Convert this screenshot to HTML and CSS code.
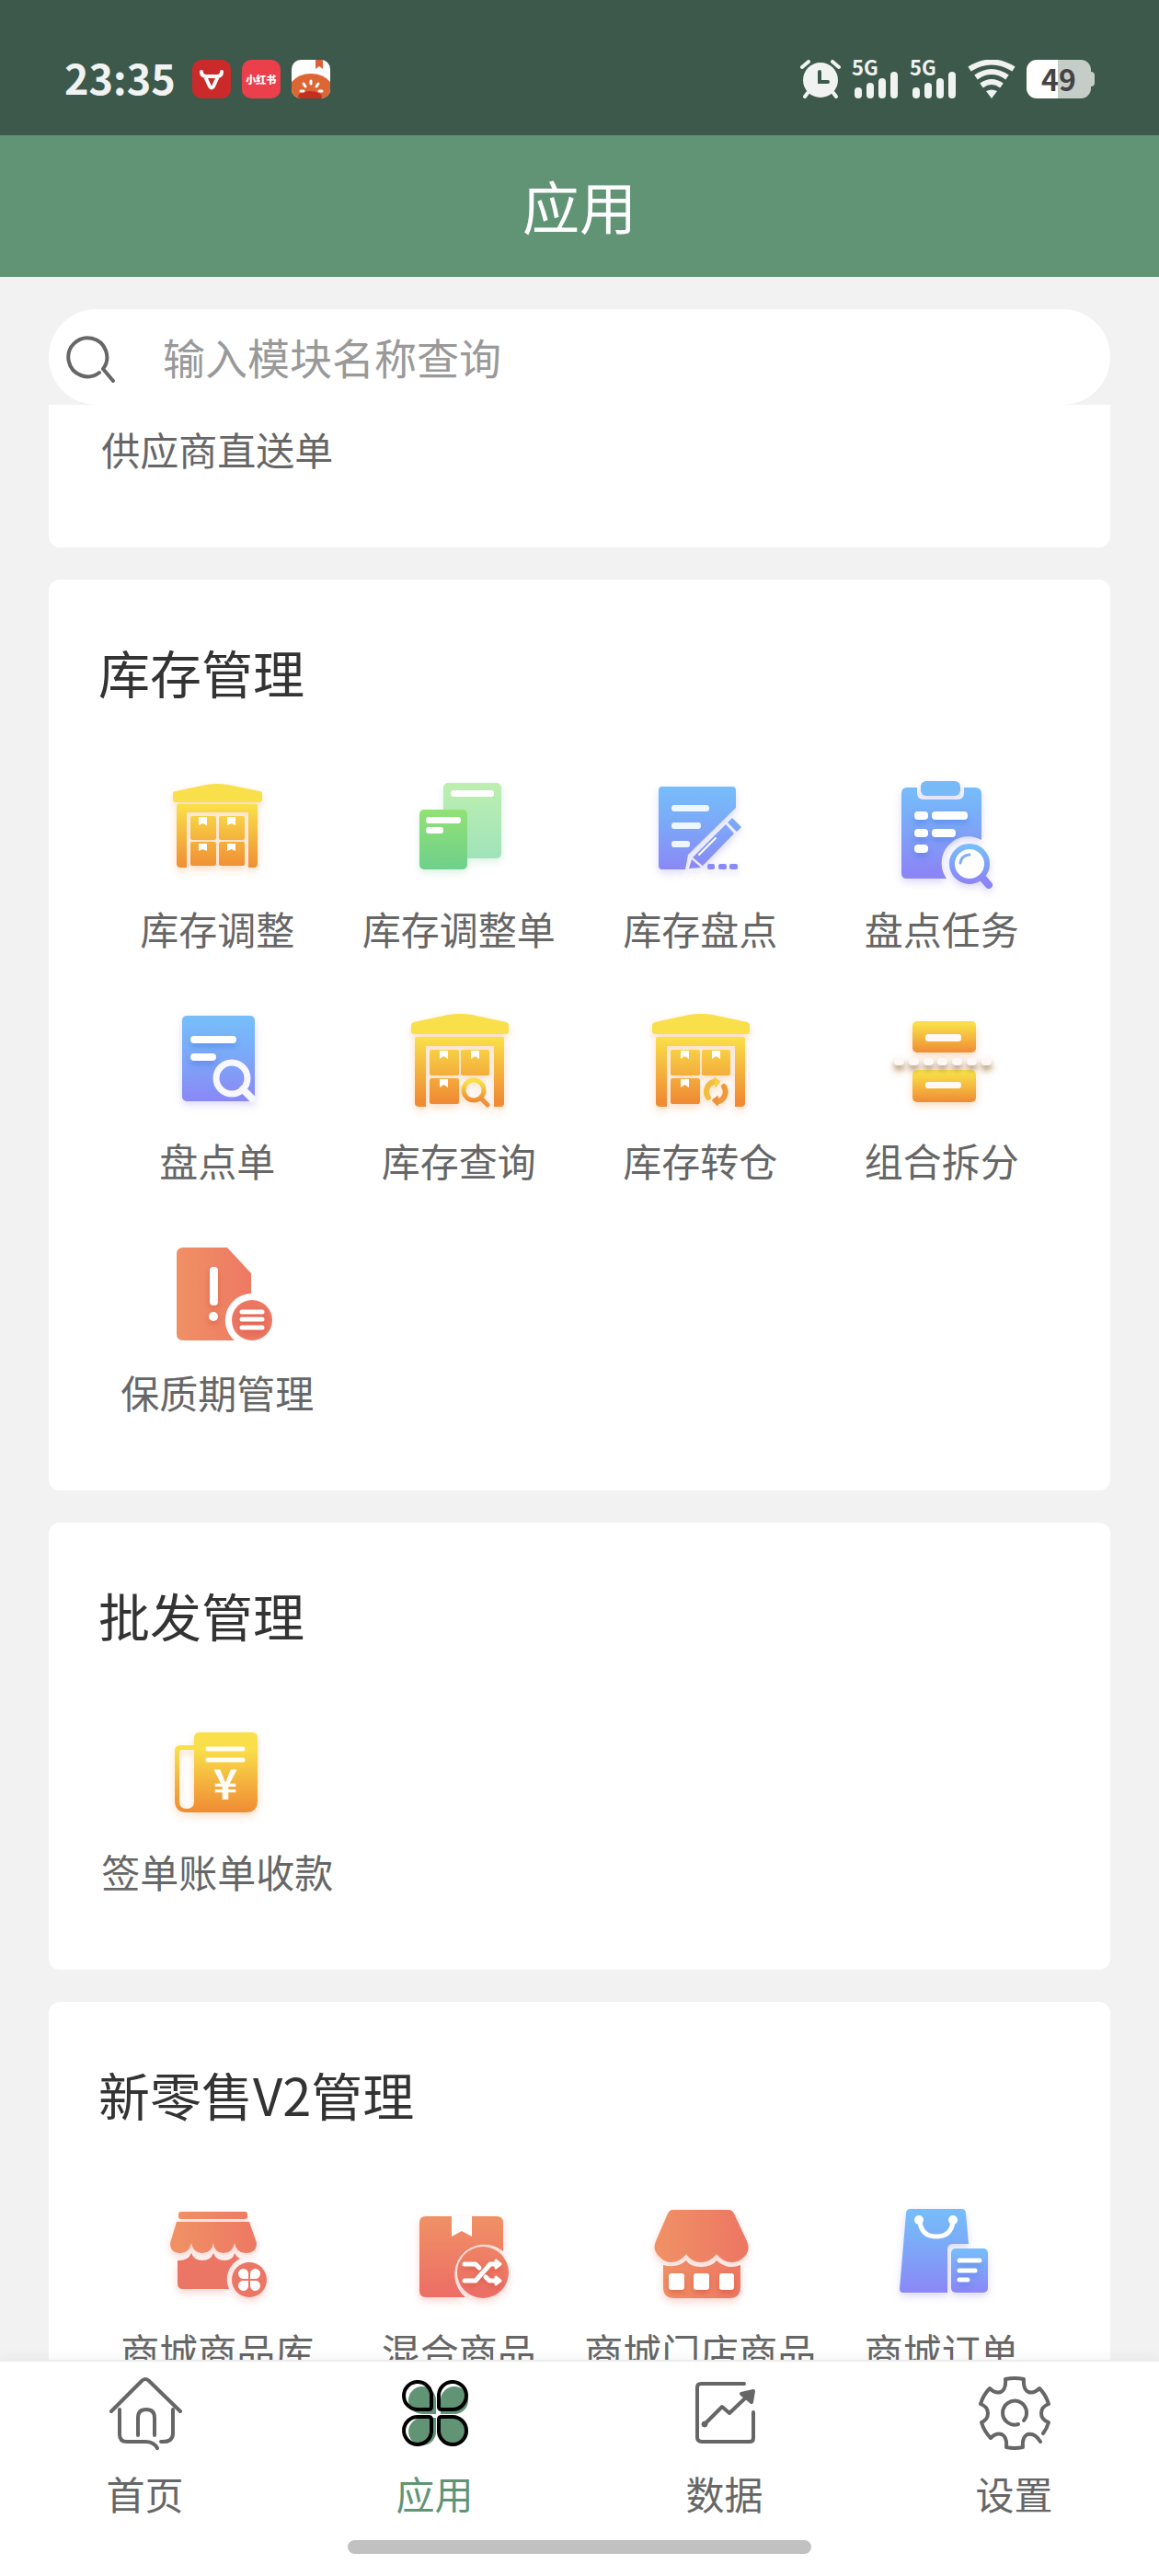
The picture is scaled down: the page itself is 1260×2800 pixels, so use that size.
FILE: index.html
```
<!DOCTYPE html>
<html lang="zh-CN">
    <head>
        <meta charset="UTF-8">
        <meta name="viewport" content="width=device-width, initial-scale=1">
        <title>应用</title>
        <link rel="stylesheet" href="styles.css">
    </head>
    <body>
        <!-- shared gradients and shapes -->
        <svg class="defs" width="0" height="0" aria-hidden="true">
            <defs>
                <linearGradient id="gold" gradientUnits="userSpaceOnUse" x1="0" y1="36" x2="0" y2="104">
                    <stop offset="0" stop-color="#f9df49"/><stop offset="1" stop-color="#f08c34"/>
                </linearGradient>
                <linearGradient id="goldbox" x1="0" y1="0" x2="0" y2="1">
                    <stop offset="0.1" stop-color="#f9de48"/><stop offset="1" stop-color="#f08c34"/>
                </linearGradient>
                <linearGradient id="blue" gradientUnits="userSpaceOnUse" x1="0" y1="15" x2="0" y2="108">
                    <stop offset="0" stop-color="#77bdfa"/><stop offset="0.35" stop-color="#7aadf8"/><stop offset="1" stop-color="#8b86f6"/>
                </linearGradient>
                <linearGradient id="bluebox" x1="0" y1="0" x2="0" y2="1">
                    <stop offset="0" stop-color="#77bdfa"/><stop offset="1" stop-color="#8b86f6"/>
                </linearGradient>
                <linearGradient id="coral" gradientUnits="userSpaceOnUse" x1="18" y1="0" x2="112" y2="0">
                    <stop offset="0" stop-color="#f09165"/><stop offset="1" stop-color="#ed7763"/>
                </linearGradient>
                <linearGradient id="coraldown" gradientUnits="userSpaceOnUse" x1="0" y1="22" x2="0" y2="112">
                    <stop offset="0" stop-color="#f09165"/><stop offset="1" stop-color="#ec6d66"/>
                </linearGradient>
                <linearGradient id="greenlight" x1="0" y1="0" x2="0" y2="1">
                    <stop offset="0" stop-color="#bdefaf"/><stop offset="1" stop-color="#a0e3ba"/>
                </linearGradient>
                <linearGradient id="green" x1="0" y1="0" x2="0" y2="1">
                    <stop offset="0" stop-color="#91e275"/><stop offset="1" stop-color="#6fd08b"/>
                </linearGradient>
            </defs>
            <symbol id="depot" viewBox="0 0 130 130">
                <path fill="#f9df49" d="M13 22q0-2 3-3l37-8q13-2 26 0l37 8q3 1 3 3v7q0 3-3 3H16q-3 0-3-3z"/>
                <path fill="url(#gold)" d="M19 35h93q2 0 2 2v70q0 4-4 4h-7V45H29v66h-7q-5 0-5-4V37q0-2 2-2z"/>
                <path fill="url(#gold)" d="M35 49h28q2 0 2 2v24q0 2-2 2H35q-2 0-2-2V51q0-2 2-2zM69 49h27q2 0 2 2v24q0 2-2 2H69q-2 0-2-2V51q0-2 2-2zM35 80h28q2 0 2 2v24q0 2-2 2H35q-2 0-2-2V82q0-2 2-2z"/>
                <path fill="#fff" d="M44 50h9v9l-4.500-3-4.500 3zM78 50h9v9l-4.500-3-4.500 3zM44 81h9v9l-4.500-3-4.500 3z"/>
            </symbol>
        </svg>

        <header>
            <div class="status">
                <div class="status-left">
                    <span class="time">23:35</span>
                    <span class="badge badge-red">
                        <svg viewBox="0 0 42 42" width="42" height="42" aria-hidden="true">
                            <path d="M10 13q0 5 5 5h12q5 0 5-5M14 18l5 11q2 3 4 0l5-11" fill="none" stroke="#fff" stroke-width="4" stroke-linecap="round" stroke-linejoin="round"/>
                        </svg>
                    </span>
                    <span class="badge badge-book">小红书</span>
                    <span class="badge badge-tomato">
                        <svg viewBox="0 0 42 42" width="42" height="42" aria-hidden="true">
                            <path d="M26 0h8v10l-4-3-4 3z" fill="#d9603a"/>
                            <path d="M0 24Q8 15 21 15t21 9v18H0z" fill="#dc6634"/>
                            <ellipse cx="20" cy="40" rx="13" ry="6" fill="#c4301f"/>
                            <path d="M21 23v3M13 26l2 3M29 26l-2 3M10 34h3M30 34h3" stroke="#fff" stroke-width="3" stroke-linecap="round"/>
                        </svg>
                    </span>
                </div>
                <div class="status-right">
                    <svg viewBox="0 0 44 42" width="44" height="42" aria-hidden="true">
                        <circle cx="22" cy="22" r="19" fill="#f0f3f1"/>
                        <path d="M2 8l7-6M42 8l-7-6M8 36l-3 4M36 36l3 4" stroke="#f0f3f1" stroke-width="4" stroke-linecap="round"/>
                        <path d="M21 13v11h9" fill="none" stroke="#3d594c" stroke-width="4" stroke-linecap="round"/>
                    </svg>
                    <svg class="signal" viewBox="0 0 51 42" width="51" height="42" aria-hidden="true">
                        <text class="net" x="0" y="17">5G</text>
                        <path d="M7 34v4M20 29v9M33 24v14M46 17v21" stroke="#f0f3f1" stroke-width="8" stroke-linecap="round"/>
                    </svg>
                    <svg class="signal" viewBox="0 0 51 42" width="51" height="42" aria-hidden="true">
                        <text class="net" x="0" y="17">5G</text>
                        <path d="M7 34v4M20 29v9M33 24v14M46 17v21" stroke="#f0f3f1" stroke-width="8" stroke-linecap="round"/>
                    </svg>
                    <svg viewBox="0 0 52 42" width="52" height="42" aria-hidden="true">
                        <path d="M2 10q24-15 48 0M9 19q17-12 34 0M15 28q11-8 22 0" fill="none" stroke="#f0f3f1" stroke-width="6"/>
                        <path d="M20 34q6-3 12 0l-6 8z" fill="#f0f3f1"/>
                    </svg>
                    <span class="battery"><span class="battery-level">49</span></span>
                </div>
            </div>
            <h1 class="title">应用</h1>
        </header>

        <label class="search">
            <svg viewBox="0 0 56 56" width="56" height="56" aria-hidden="true">
                <path d="M37 45A21 21 0 1 1 41 41L52 54" fill="none" stroke="#666" stroke-width="4" stroke-linecap="round" stroke-linejoin="round"/>
            </svg>
            <input type="search" placeholder="输入模块名称查询" aria-label="输入模块名称查询">
        </label>

        <main class="list">
            <section class="card card-cut">
                <div class="apps">
                    <a class="app" href="#">供应商直送单</a>
                </div>
            </section>

            <section class="card">
                <h2>库存管理</h2>
                <div class="apps">
                    <a class="app" href="#">
                        <svg class="icon gold" viewBox="0 0 130 130" aria-hidden="true">
                            <path fill="#f9df49" d="M17 22q0-2 3-2l33-7q12-2 24 0l34 7q3 0 3 2v7q0 3-3 3H20q-3 0-3-3z"/>
                            <path fill="url(#gold)" d="M23 34h84q2 0 2 2v63q0 4-4 4h-6V43H32v60h-6q-5 0-5-4V36q0-2 2-2z"/>
                            <g fill="url(#gold)">
                                <rect x="36" y="47" width="28" height="26" rx="2"/>
                                <rect x="67" y="47" width="28" height="26" rx="2"/>
                                <rect x="36" y="75" width="28" height="26" rx="2"/>
                                <rect x="67" y="75" width="28" height="26" rx="2"/>
                            </g>
                            <path fill="#fff" d="M45 48h9v9l-4.500-2-4.500 2zM76 48h9v9l-4.500-2-4.500 2zM45 77h9v8l-4.500-2-4.500 2zM76 77h9v8l-4.500-2-4.500 2z"/>
                        </svg>
                        库存调整
                    </a>
                    <a class="app" href="#">
                        <svg class="icon green" viewBox="0 0 130 130" aria-hidden="true">
                            <rect x="48" y="11" width="63" height="82" rx="5" fill="url(#greenlight)"/>
                            <rect x="56" y="19" width="47" height="7" rx="3" fill="#fff"/>
                            <rect x="22" y="40" width="52" height="65" rx="5" fill="url(#green)"/>
                            <rect x="29" y="48" width="38" height="7" rx="3" fill="#fff"/>
                            <rect x="29" y="59" width="19" height="7" rx="3" fill="#fff"/>
                        </svg>
                        库存调整单
                    </a>
                    <a class="app" href="#">
                        <svg class="icon blue" viewBox="0 0 130 130" aria-hidden="true">
                            <path fill="url(#blue)" d="M24 15h76q4 0 4 4v19L52 89l-3 16H24q-4 0-4-4V19q0-4 4-4z"/>
                            <g fill="#eef6ff">
                                <rect x="34" y="35" width="41" height="7" rx="3"/>
                                <rect x="34" y="54" width="32" height="7" rx="3"/>
                                <rect x="34" y="74" width="20" height="7" rx="3"/>
                            </g>
                            <path fill="url(#blue)" d="M100 49l10 10-5 5-10-10zM93 56l9 10-34 35-11-9zM56 94l10 9-13 1zM75 99h4q2 0 2 2v2q0 2-2 2h-4q-2 0-2-2v-2q0-2 2-2zM87 99h5q2 0 2 2v2q0 2-2 2h-5q-2 0-2-2v-2q0-2 2-2zM99 99h5q2 0 2 2v2q0 2-2 2h-5q-2 0-2-2v-2q0-2 2-2z"/>
                            <path d="M82 71L64 89" stroke="#fff" stroke-width="2" stroke-linecap="round"/>
                        </svg>
                        库存盘点
                    </a>
                    <a class="app" href="#">
                        <svg class="icon blue" viewBox="0 0 130 130" aria-hidden="true">
                            <path fill="url(#blue)" d="M27 16h11v6q0 7 7 7h37q7 0 7-7v-6h12q7 0 7 7v50A29 29 0 0 0 70 115H27q-6 0-6-6V23q0-7 6-7z"/>
                            <rect x="42" y="9" width="43" height="16" rx="6" fill="#78b9f7"/>
                            <g class="soft" fill="#fff">
                                <rect x="35" y="42" width="15" height="9" rx="4"/><rect x="54" y="42" width="39" height="9" rx="4"/>
                                <rect x="35" y="61" width="15" height="9" rx="4"/><rect x="54" y="61" width="26" height="9" rx="4"/>
                                <rect x="35" y="78" width="15" height="9" rx="4"/>
                            </g>
                            <path d="M109 114l7 8" stroke="#8b86f6" stroke-width="8" stroke-linecap="round"/>
                            <circle cx="95" cy="99" r="19" fill="#fff" stroke="url(#bluebox)" stroke-width="6"/>
                            <path d="M85 98q1-8 10-9" fill="none" stroke="#7cb0f8" stroke-width="3" stroke-linecap="round"/>
                        </svg>
                        盘点任务
                    </a>
                    <a class="app" href="#">
                        <svg class="icon blue" viewBox="0 0 130 130" aria-hidden="true">
                            <rect x="27" y="12" width="79" height="93" rx="5" fill="url(#blue)"/>
                            <g class="soft" fill="#fff">
                                <rect x="36" y="34" width="50" height="8" rx="4"/>
                                <rect x="36" y="53" width="28" height="8" rx="4"/>
                            </g>
                            <circle cx="81" cy="80" r="17" fill="none" stroke="#f7f8ff" stroke-width="7"/>
                            <path d="M93 92l10 10" stroke="#f7f8ff" stroke-width="8" stroke-linecap="round"/>
                        </svg>
                        盘点单
                    </a>
                    <a class="app" href="#">
                        <svg class="icon gold" viewBox="0 0 130 130" aria-hidden="true">
                            <use href="#depot"/>
                            <circle cx="81" cy="93" r="11" fill="none" stroke="url(#goldbox)" stroke-width="5"/>
                            <path d="M90 103l6 6" stroke="#f0913a" stroke-width="5" stroke-linecap="round"/>
                        </svg>
                        库存查询
                    </a>
                    <a class="app" href="#">
                        <svg class="icon gold" viewBox="0 0 130 130" aria-hidden="true">
                            <use href="#depot"/>
                            <path d="M74 101A11 11 0 0 1 80 84" fill="none" stroke="#f5bd40" stroke-width="6" stroke-linecap="round"/>
                            <path d="M91 89A11 11 0 0 1 86 105" fill="none" stroke="#f1993a" stroke-width="6" stroke-linecap="round"/>
                            <path d="M81 80l5 4-4 5z" fill="#f7cf45" stroke="#f7cf45" stroke-width="2" stroke-linejoin="round"/>
                            <path d="M84 109l-5-5 5-4z" fill="#f0913a" stroke="#f0913a" stroke-width="2" stroke-linejoin="round"/>
                        </svg>
                        库存转仓
                    </a>
                    <a class="app" href="#">
                        <svg class="icon gold" viewBox="0 0 130 130" aria-hidden="true">
                            <rect x="33" y="18" width="69" height="34" rx="5" fill="url(#goldbox)"/>
                            <rect x="33" y="71" width="69" height="35" rx="5" fill="url(#goldbox)"/>
                            <rect x="47" y="32" width="39" height="8" rx="3" fill="#fff9f5"/>
                            <rect x="47" y="84" width="39" height="7" rx="3" fill="#fff9f5"/>
                            <path class="perforation" d="M17 62h3M33 62h3M49 62h3M64 62h3M80 62h3M96 62h3M112 62h3" stroke="#fdf8f6" stroke-width="8" stroke-linecap="round"/>
                        </svg>
                        组合拆分
                    </a>
                    <a class="app" href="#">
                        <svg class="icon" viewBox="0 0 130 130" aria-hidden="true">
                            <path fill="url(#coral)" d="M28 12h48l26 28v22A29 29 0 0 0 84 113H28q-7 0-7-7V19q0-7 7-7z"/>
                            <g class="ember">
                                <rect x="57" y="33" width="9" height="42" rx="4" fill="#fff"/>
                                <circle cx="61" cy="87" r="5" fill="#fff"/>
                            </g>
                            <circle cx="103" cy="91" r="22" fill="#ec7763"/>
                            <path class="ember" d="M92 82h22M92 90h22M92 99h22" stroke="#fff" stroke-width="5" stroke-linecap="round"/>
                        </svg>
                        保质期管理
                    </a>
                </div>
            </section>

            <section class="card">
                <h2>批发管理</h2>
                <div class="apps">
                    <a class="app" href="#">
                        <svg class="icon gold" viewBox="0 0 130 130" aria-hidden="true">
                            <path fill="url(#gold)" fill-rule="evenodd" d="M46 18h57q6 0 6 6v68q0 13-13 13H32q-13 0-13-13V38q0-6 6-6h15v-8q0-6 6-6zM27 37q-3 0-3 3v53q0 8 8 8t8-8V37z"/>
                            <path d="M55 36h38M55 48h38" stroke="#fffdf5" stroke-width="5" stroke-linecap="round"/>
                            <text class="yuan" x="74" y="91" text-anchor="middle">¥</text>
                        </svg>
                        签单账单收款
                    </a>
                </div>
            </section>

            <section class="card">
                <h2>新零售V2管理</h2>
                <div class="apps">
                    <a class="app" href="#">
                        <svg class="icon coral" viewBox="0 0 130 130" aria-hidden="true">
                            <rect x="23" y="18" width="75" height="8" rx="3" fill="url(#coral)"/>
                            <path fill="url(#coral)" d="M21 29h79l8 23q0 11-12 11-10 0-12-11-2 11-12 11T61 52q-2 11-12 11T37 52q-2 11-12 11-11 0-11-11z"/>
                            <path fill="#ec7665" d="M22 71q11 1 15-8 3 8 12 8t12-8q3 8 12 8t11-8q2 4 6 6A25 25 0 0 0 78 102H28q-6 0-6-6z"/>
                            <circle cx="100" cy="92" r="19" fill="#ec7665"/>
                            <path fill="#fff" d="M99 91h-5a5.500 5.500 0 1 1 5-5.500zM101 91h5a5.500 5.500 0 1 0-5-5.500zM99 93h-5a5.500 5.500 0 1 0 5 5.500zM101 93h5a5.500 5.500 0 1 1-5 5.500z"/>
                        </svg>
                        商城商品库
                    </a>
                    <a class="app" href="#">
                        <svg class="icon coral" viewBox="0 0 130 130" aria-hidden="true">
                            <path fill="url(#coraldown)" d="M29 23h77q7 0 7 7v31A32 32 0 0 0 72 111H29q-7 0-7-7V30q0-7 7-7z"/>
                            <path d="M57 23h22v22l-11-6-11 6z" fill="#fff"/>
                            <circle cx="91" cy="84" r="28" fill="url(#coraldown)"/>
                            <g class="ember" fill="none" stroke="#fff" stroke-width="5" stroke-linecap="round" stroke-linejoin="round">
                                <path d="M71 93h12l16-18h7M71 75h12l4 4M94 89l4 4h8"/>
                                <path d="M105 71l5 4-5 4zM105 89l5 4-5 4z" stroke-width="3" fill="#fff"/>
                            </g>
                        </svg>
                        混合商品
                    </a>
                    <a class="app" href="#">
                        <svg class="icon coral" viewBox="0 0 130 130" aria-hidden="true">
                            <path fill="url(#coral)" d="M35 16h61q4 0 6 4l14 30q4 9-2 16-6 7-14 7-10 0-17-9-7 9-17 9t-16-9q-7 9-17 9-7 0-13-7-7-7-3-16l13-30q2-4 5-4z"/>
                            <path fill="url(#coral)" d="M25 76q15 4 25-5 4 7 16 7t17-7q12 11 26 5v24q0 12-12 12H37q-12 0-12-12z"/>
                            <g class="ember" fill="#fff">
                                <rect x="31" y="85" width="17" height="18" rx="3"/>
                                <rect x="58" y="85" width="17" height="18" rx="3"/>
                                <rect x="86" y="85" width="16" height="18" rx="3"/>
                            </g>
                        </svg>
                        商城门店商品
                    </a>
                    <a class="app" href="#">
                        <svg class="icon blue" viewBox="0 0 130 130" aria-hidden="true">
                            <path fill="url(#blue)" d="M31 15h55q5 0 5 5l3 33H77q-6 0-6 6v47H23q-4 0-4-4l7-82q0-5 5-5z"/>
                            <path d="M41 29q2 16 18 16t18-16" fill="none" stroke="#fff" stroke-width="5"/>
                            <circle cx="40" cy="27" r="5" fill="#fff"/>
                            <circle cx="77" cy="27" r="5" fill="#fff"/>
                            <rect x="75" y="58" width="40" height="48" rx="5" fill="url(#bluebox)"/>
                            <path class="soft" d="M84 71h22M84 82h17M84 92h9" stroke="#fff" stroke-width="5" stroke-linecap="round"/>
                        </svg>
                        商城订单
                    </a>
                </div>
            </section>
        </main>

        <nav class="tabbar">
            <div class="tabs">
                <a class="tab" href="#">
                    <svg viewBox="0 0 80 80" width="80" height="80" aria-hidden="true">
                        <path d="M3 38L36 5q4-4 8 0l34 33M12 36v27q0 8 8 8h20q9 0 13 7M57 71q13 1 13-9V36M32 64V45q0-9 9-9t9 9v19"/>
                    </svg>
                    首页
                </a>
                <a class="tab active" href="#">
                    <svg viewBox="0 0 80 80" width="80" height="80" aria-hidden="true">
                        <path class="petal" d="M41 41H26a15 15 0 1 1 15-15zM46 41h16a15 15 0 1 0-16-15zM41 45H26a15 15 0 1 0 15 17zM46 45h16a15 15 0 1 1-16 17z"/>
                        <path class="petal-line" d="M36 33q0 3-3 3H22A15 15 0 1 1 36 20zM44 33q0 3 3 3h12A15 15 0 1 0 44 20zM36 47q0-3-3-3H22A15 15 0 1 0 36 60zM44 47q0-3 3-3h12A15 15 0 1 1 44 60z"/>
                    </svg>
                    应用
                </a>
                <a class="tab" href="#">
                    <svg viewBox="0 0 80 80" width="80" height="80" aria-hidden="true">
                        <path d="M61 8H14q-4 0-4 4v54q0 5 5 5h52q4 0 4-4V39M18 52l19-19 8 7 21-20"/>
                        <path class="solid" d="M71 16l-13 3 11 9z"/>
                        <circle class="solid" cx="18" cy="52" r="3"/>
                    </svg>
                    数据
                </a>
                <a class="tab" href="#">
                    <svg viewBox="0 0 80 80" width="80" height="80" aria-hidden="true">
                        <path d="M71 62q4-5 6-12-8-3-8-10t8-10q-3-10-10-17-6 6-12 4-6-3-5-14-10-2-20 0 1 11-5 14-6 2-12-4-7 7-10 17 8 3 8 10T4 50q3 10 10 17 6-6 12-4 6 3 5 14 9 2 18 0-1-11 5-14 8-2 14 8"/>
                        <path d="M44 52a13 13 0 1 1 6-4"/>
                    </svg>
                    设置
                </a>
            </div>
            <div class="home-bar"></div>
        </nav>
    </body>
</html>
```
FILE: styles.css
```
*{
    box-sizing: border-box;
}

body{
    margin: 0;
    height: 100vh;
    display: flex;
    flex-direction: column;
    background-color: #f2f2f2;
    color: #666;
    font-family: "Noto Sans CJK SC", sans-serif;
    font-size: 42px;
    line-height: 50px;
}

a{
    color: inherit;
    text-decoration: none;
}

h1, h2{
    margin: 0;
    font-weight: 400;
}

.defs{
    position: absolute;
}

/* status bar */
.status{
    display: flex;
    justify-content: space-between;
    align-items: center;
    height: 147px;
    padding: 24px 70px 0;
    background-color: #3d594c;
    color: #f0f3f1;
}

.status-left, .status-right{
    display: flex;
    align-items: center;
    gap: 12px;
}

.time{
    margin-right: 6px;
    padding-bottom: 4px;
    font-size: 45px;
    font-weight: 700;
}

.badge{
    display: flex;
    justify-content: center;
    align-items: center;
    width: 42px;
    height: 42px;
    border-radius: 10px;
    overflow: hidden;
    color: #fff;
    font-size: 11px;
    font-weight: 900;
    line-height: 16px;
}

.badge-red{
    background-color: #cb2a2b;
}

.badge-book{
    background-color: #eb3f4b;
}

.badge-tomato{
    background-color: #fff;
}

.signal{
    overflow: visible;
}

.net{
    font-size: 22px;
    font-weight: 700;
    fill: #f0f3f1;
}

.battery{
    display: flex;
    align-items: center;
}

.battery::after{
    content: "";
    width: 4px;
    height: 16px;
    border-radius: 0 4px 4px 0;
    background-color: #c5cdc9;
}

.battery-level{
    width: 70px;
    height: 42px;
    border-radius: 11px;
    background: linear-gradient(to right, #fff 48%, #c5cdc9 48%);
    color: #444;
    font-size: 32px;
    font-weight: 700;
    line-height: 40px;
    text-align: center;
}

.title{
    padding: 31px 0 33px;
    background-color: #609475;
    color: #fff;
    font-size: 62px;
    line-height: 90px;
    text-align: center;
}

/* search */
.search{
    display: flex;
    align-items: center;
    gap: 50px;
    margin: 35px 53px 0;
    padding: 0 18px;
    border-radius: 52px;
    background-color: #fff;
}

.search input{
    flex: 1;
    min-width: 0;
    height: 104px;
    padding: 0 0 2px;
    border: 0;
    outline: 0;
    background: none;
    color: #333;
    font-family: inherit;
    font-size: 46px;
}

.search input::placeholder{
    color: #999;
    opacity: 1;
}

/* module cards */
.list{
    flex: 1;
    min-height: 0;
    padding: 0 53px;
    overflow-y: auto;
    scrollbar-width: none;
}

.card{
    margin-bottom: 35px;
    padding: 60px 52px 82px;
    border-radius: 12px;
    background-color: #fff;
}

.card-cut{
    padding-top: 23px;
    border-radius: 0 0 12px 12px;
}

.card h2{
    margin-bottom: 70px;
    padding-left: 2px;
    color: #333;
    font-size: 56px;
    line-height: 80px;
}

.apps{
    display: grid;
    grid-template-columns: repeat(4, 1fr);
    row-gap: 58px;
}

.app{
    display: flex;
    flex-direction: column;
    align-items: center;
    gap: 14px;
    white-space: nowrap;
}

.icon{
    width: 130px;
    height: 130px;
    overflow: visible;
}

.gold{
    filter: drop-shadow(0 4px 4px rgba(240, 140, 52, 0.3));
}

.green{
    filter: drop-shadow(0 4px 4px rgba(111, 208, 139, 0.25));
}

.blue{
    filter: drop-shadow(0 4px 4px rgba(139, 134, 246, 0.3));
}

.coral{
    filter: drop-shadow(0 4px 4px rgba(236, 118, 101, 0.3));
}

.soft{
    filter: drop-shadow(0 4px 3px rgba(60, 110, 220, 0.4));
}

.ember{
    filter: drop-shadow(0 3px 3px rgba(200, 60, 40, 0.4));
}

.perforation{
    filter: drop-shadow(0 5px 3px rgba(110, 80, 40, 0.5));
}

.yuan{
    fill: #fffdf5;
    font-size: 45px;
    font-weight: 700;
}

/* bottom tabs */
.tabbar{
    position: relative;
    padding: 16px 0 24px;
    border-top: 2px solid #ebebeb;
    background-color: #fff;
    box-shadow: 0 -4px 12px rgba(0, 0, 0, 0.04);
}

.tabs{
    display: flex;
}

.tab{
    flex: 1;
    display: flex;
    flex-direction: column;
    align-items: center;
    gap: 22px;
}

.tab path{
    fill: none;
    stroke: #666;
    stroke-width: 4;
    stroke-linecap: round;
    stroke-linejoin: round;
}

.tab .solid{
    fill: #666;
    stroke: #666;
}

.tab .petal{
    fill: #609475;
    stroke: none;
}

.tab .petal-line{
    stroke: #000;
}

.active{
    color: #609475;
}

.home-bar{
    width: 40%;
    height: 15px;
    margin: 26px auto 0;
    border-radius: 8px;
    background-color: #c1c1c1;
}
```
